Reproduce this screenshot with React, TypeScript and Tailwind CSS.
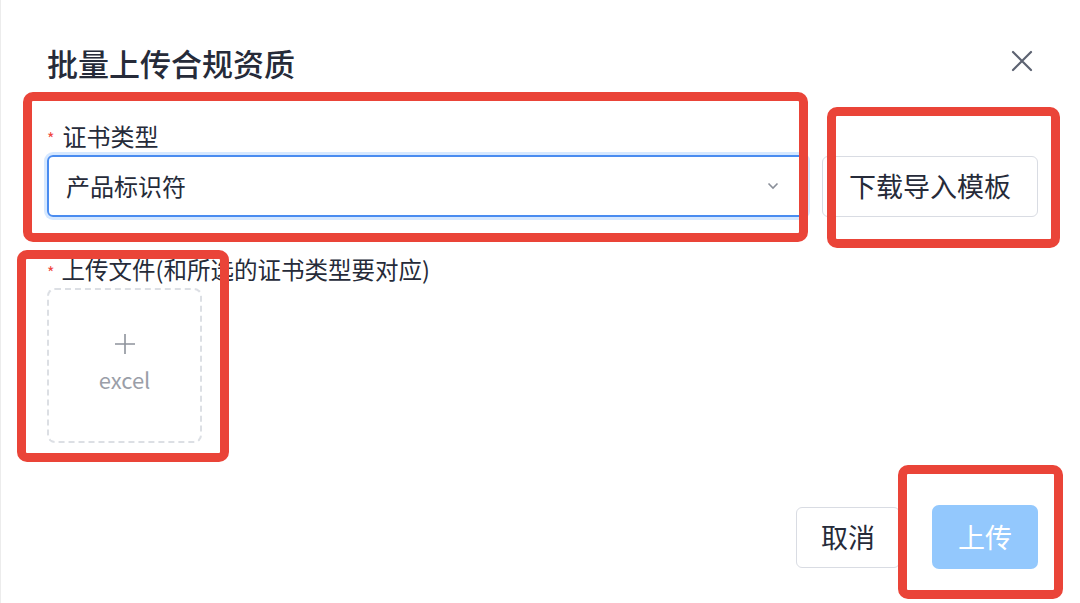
import React from "react";

const font = { fontFamily: '"Noto Sans CJK SC", "Noto Sans", sans-serif' };

function RedBox({ cls }: { cls: string }) {
  return (
    <div
      className={`pointer-events-none absolute rounded-[10px] border-[9px] border-[#ea4438] ${cls}`}
    />
  );
}

export default function App() {
  return (
    <div
      className="relative h-[603px] w-[1080px] overflow-hidden border-l border-[#ececec] bg-white"
      style={font}
    >
      <div className="flex flex-col pl-[46px] pr-[42px] pt-[43px]">
        {/* header */}
        <div className="flex h-[40px] items-center justify-between">
          <div className="text-[31px] font-medium leading-[40px] text-[#262b39]">批量上传合规资质</div>
          <svg
            width="22"
            height="22"
            viewBox="0 0 22 22"
            className="mr-[5px] mt-[-4px]"
            fill="none"
            stroke="#5d6372"
            strokeWidth="2.2"
            strokeLinecap="round"
          >
            <path d="M2 2 L20 20 M20 2 L2 20" />
          </svg>
        </div>

        {/* certificate type */}
        <div className="mt-[37px] flex h-[32px] items-center">
          <span className="mr-[8px] mt-[4px] text-[16px] leading-none text-[#f0473f]">*</span>
          <span className="text-[24px] leading-[32px] text-[#262b39]">证书类型</span>
        </div>
        <div className="mt-[3px] flex items-center gap-[15px]">
          <div className="flex h-[62px] w-[761px] items-center justify-between rounded-[6px] border-2 border-[#4a8cf0] pl-[17px] pr-[26px] shadow-[0_0_0_3px_#d6e8ff]">
            <span className="text-[24px] text-[#262b39]">产品标识符</span>
            <svg width="12" height="8" viewBox="0 0 12 8" fill="none" stroke="#8a8f99" strokeWidth="1.6">
              <path d="M1.5 1.5 L6 6 L10.5 1.5" />
            </svg>
          </div>
          <button className="flex h-[61px] w-[216px] items-center justify-center rounded-[6px] border-[1.5px] border-[#d9dce3] bg-white text-[27px] text-[#262b39]">
            下载导入模板
          </button>
        </div>

        {/* upload */}
        <div className="mt-[37px] flex h-[30px] items-center">
          <span className="mr-[7px] mt-[6px] text-[16px] leading-none text-[#f0473f]">*</span>
          <span className="text-[23.5px] leading-[30px] text-[#262b39]">上传文件(和所选的证书类型要对应)</span>
        </div>
        <div className="mt-[4px] flex h-[155px] w-[155px] flex-col items-center justify-center rounded-[8px] border-2 border-dashed border-[#dcdfe4]">
          <svg width="22" height="22" viewBox="0 0 22 22" fill="none" stroke="#8e939c" strokeWidth="1.6" className="mt-[-6px]">
            <path d="M11 1 V21 M1 11 H21" />
          </svg>
          <span className="mt-[10px] text-[22px] leading-[28px] text-[#9a9ea8]">excel</span>
        </div>

        {/* footer */}
        <div className="mt-[62px] flex items-center justify-end gap-[32px]">
          <button className="flex h-[61px] w-[104px] items-center justify-center rounded-[6px] border-[1.5px] border-[#d9dce3] bg-white text-[27px] text-[#262b39]">
            取消
          </button>
          <button className="flex h-[64px] w-[106px] items-center justify-center rounded-[7px] bg-[#93c8fd] text-[27px] text-white">
            上传
          </button>
        </div>
      </div>

      {/* annotation boxes */}
      <RedBox cls="left-[22px] top-[92px] h-[150px] w-[785px]" />
      <RedBox cls="left-[826px] top-[107px] h-[141px] w-[233px]" />
      <RedBox cls="left-[16px] top-[250px] h-[212px] w-[212px]" />
      <RedBox cls="left-[897px] top-[465px] h-[134px] w-[165px]" />
    </div>
  );
}
